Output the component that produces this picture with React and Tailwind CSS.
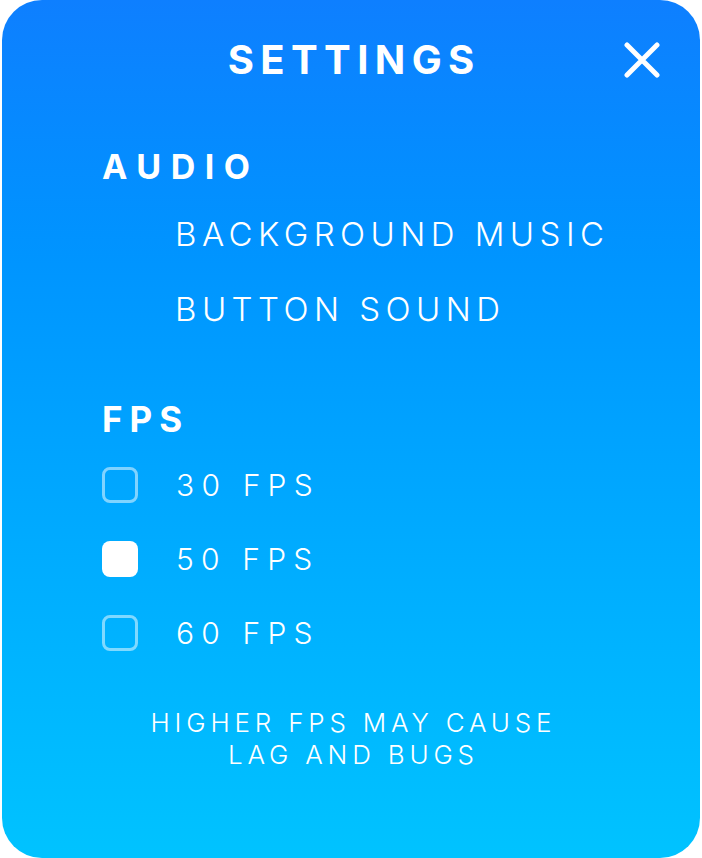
import React, { useState } from "react";

const FONT = { fontFamily: "Inter, 'Noto Sans', sans-serif" };

function CloseIcon() {
  return (
    <svg width="36" height="36" viewBox="0 0 36 36" fill="none">
      <path
        d="M3 3L33 33M33 3L3 33"
        stroke="white"
        strokeWidth="5"
        strokeLinecap="round"
      />
    </svg>
  );
}

function FpsOption({ label, checked, onClick }) {
  return (
    <button
      type="button"
      onClick={onClick}
      className="flex items-center gap-[38px] text-left"
    >
      <span
        className={`block w-[36px] h-[36px] rounded-[8px] ${
          checked ? "bg-white" : "border-[3px] border-white/50"
        }`}
      />
      <span className="text-[30px] leading-none font-light tracking-[0.24em] text-white">
        {label}
      </span>
    </button>
  );
}

export default function App() {
  const [fps, setFps] = useState(50);
  const options = [30, 50, 60];

  return (
    <div className="w-[702px] h-[858px] bg-white px-[2px]" style={FONT}>
      <div className="h-full rounded-[40px] bg-gradient-to-b from-[#0e7fff] to-[#00c3ff] flex flex-col pt-[40px] text-white">
        <div className="relative flex justify-center">
          <h1 className="text-[40px] leading-none font-bold tracking-[0.16em] mr-[-0.16em]">
            SETTINGS
          </h1>
          <button type="button" className="absolute right-[40px] top-[2px]">
            <CloseIcon />
          </button>
        </div>

        <div className="flex flex-col pl-[100px]">
          <h2 className="mt-[70px] text-[34px] leading-none font-bold tracking-[0.28em]">
            AUDIO
          </h2>
          <div className="flex flex-col pl-[73px]">
            <span className="mt-[34px] text-[33px] leading-none font-light tracking-[0.165em]">
              BACKGROUND MUSIC
            </span>
            <span className="mt-[42px] text-[33px] leading-none font-light tracking-[0.165em]">
              BUTTON SOUND
            </span>
          </div>

          <h2 className="mt-[76px] text-[35px] leading-none font-bold tracking-[0.2em]">
            FPS
          </h2>
          <div className="flex flex-col items-start gap-[38px] mt-[30px]">
            {options.map((o) => (
              <FpsOption
                key={o}
                label={`${o} FPS`}
                checked={fps === o}
                onClick={() => setFps(o)}
              />
            ))}
          </div>
        </div>

        <p className="mt-[56px] text-center text-[26px] leading-[32px] font-light tracking-[0.185em] pl-[0.185em]">
          HIGHER FPS MAY CAUSE
          <br />
          LAG AND BUGS
        </p>
      </div>
    </div>
  );
}
